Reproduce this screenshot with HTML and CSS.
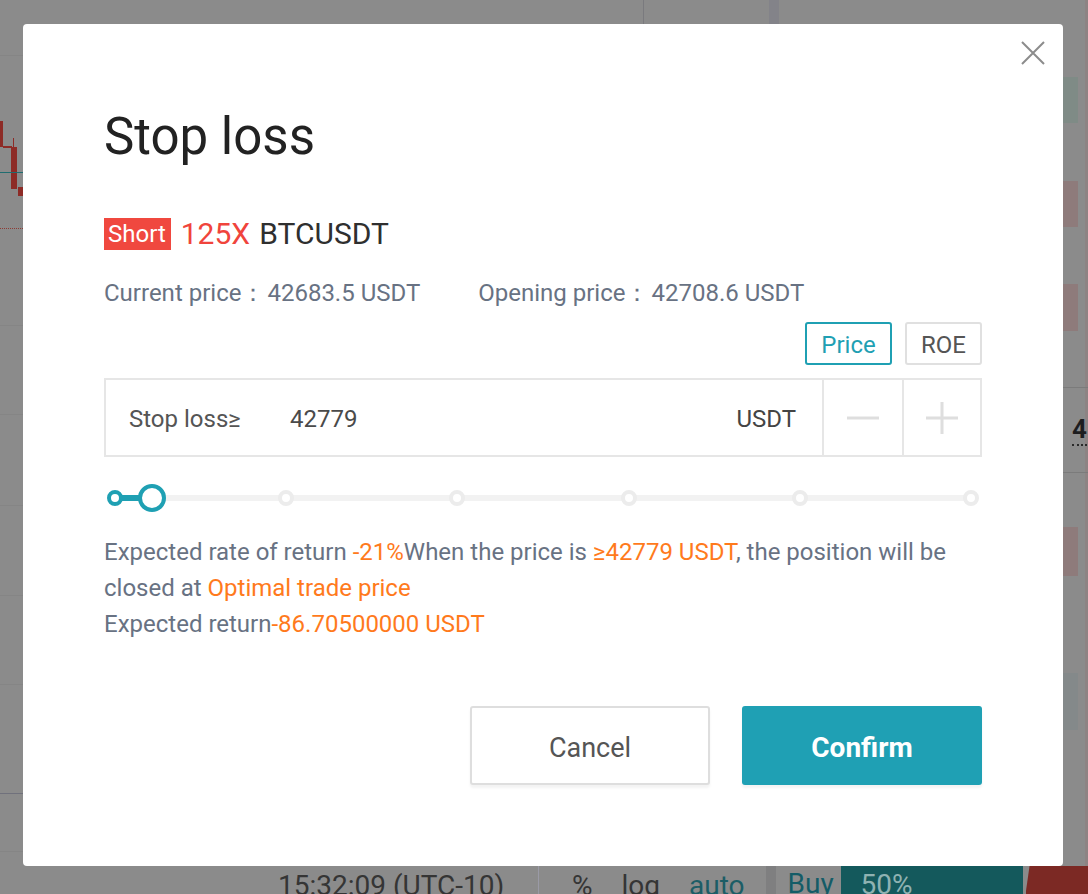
FILE: index.html
```html
<!DOCTYPE html>
<html lang="en">
<head>
<meta charset="utf-8">
<title>Stop loss</title>
<link rel="stylesheet" href="styles.css">
</head>
<body>
<div class="backdrop">
  <div class="chart-area">
    <div class="deco top-line"></div>
    <div class="deco top-band"></div>
    <div class="deco candle c1"></div>
    <div class="deco candle c2"></div>
    <div class="deco candle c3"></div>
    <div class="deco candle c4"></div>
    <div class="deco candle c5"></div>
    <div class="deco teal-line"></div>
    <div class="deco dotted-line"></div>
    <div class="deco grid g1"></div>
    <div class="deco grid g2"></div>
    <div class="deco grid g3"></div>
    <div class="deco grid g4"></div>
    <div class="deco grid g5"></div>
    <div class="deco grid g6"></div>
    <div class="deco grid g7"></div>
    <div class="deco grid dark g8"></div>
    <div class="deco book b1 green"></div>
    <div class="deco book b2 red"></div>
    <div class="deco book b3 red"></div>
    <div class="deco book b4 red"></div>
    <div class="deco book b5 green"></div>
    <div class="deco edge-col"></div>
    <div class="deco hline h1"></div>
    <div class="deco hline h2"></div>
    <div class="deco last-price">4</div>
  </div>
  <div class="bottom-bar">
    <span class="bb-time">15:32:09 (UTC-10)</span>
    <span class="bb-sep"></span>
    <span class="bb-opt">%</span>
    <span class="bb-opt">log</span>
    <span class="bb-opt bb-auto">auto</span>
    <span class="bb-band"></span>
    <span class="bb-buy">Buy</span>
    <span class="bb-pct">50%</span>
    <span class="bb-red"></span>
  </div>
</div>

<div class="modal">
  <button class="close" aria-label="Close">
    <svg width="24" height="24" viewBox="0 0 24 24"><path d="M1 1 L23 23 M23 1 L1 23" stroke="#8c8c8c" stroke-width="2" fill="none"/></svg>
  </button>
  <h1 class="title">Stop loss</h1>
  <div class="product">
    <span class="badge">Short</span>
    <span class="lev">125X</span>
    <span class="sym">BTCUSDT</span>
  </div>
  <div class="prices">
    <span class="pitem"><span class="plabel">Current price：</span>42683.5 USDT</span>
    <span class="pitem"><span class="plabel">Opening price：</span>42708.6 USDT</span>
  </div>
  <div class="modes">
    <button class="mode active">Price</button>
    <button class="mode">ROE</button>
  </div>
  <div class="input-row">
    <span class="in-label">Stop loss≥</span>
    <span class="in-value">42779</span>
    <span class="in-unit">USDT</span>
    <span class="step">
      <svg width="34" height="34" viewBox="0 0 34 34"><path d="M1 17 H33" stroke="#dedede" stroke-width="3"/></svg>
    </span>
    <span class="step last">
      <svg width="34" height="34" viewBox="0 0 34 34"><path d="M1 17 H33 M17 1 V33" stroke="#dedede" stroke-width="3"/></svg>
    </span>
  </div>
  <div class="slider">
    <div class="track"></div>
    <div class="fill"></div>
    <div class="dots">
      <span class="dot on"></span>
      <span class="dot"></span>
      <span class="dot"></span>
      <span class="dot"></span>
      <span class="dot"></span>
      <span class="dot"></span>
    </div>
    <div class="handle"></div>
  </div>
  <div class="desc">
    <p>Expected rate of return <em>-21%</em>When the price is <em>≥42779 USDT</em>, the position will be closed at <em>Optimal trade price</em></p>
    <p>Expected return<em>-86.70500000 USDT</em></p>
  </div>
  <div class="actions">
    <button class="btn cancel">Cancel</button>
    <button class="btn confirm">Confirm</button>
  </div>
</div>
</body>
</html>
```

FILE: styles.css
```css
* { box-sizing: border-box; }
html, body {
  margin: 0;
  padding: 0;
}
body {
  width: 1088px;
  height: 894px;
  overflow: hidden;
  position: relative;
  font-family: Roboto, "Noto Sans", "Liberation Sans", sans-serif;
  background: #8a8a8a;
}

/* ---------- dimmed page behind the dialog ---------- */
.backdrop {
  width: 1088px;
  height: 894px;
  display: flex;
  flex-direction: column;
  background: #8b8b8b;
}
.chart-area {
  flex: 1;
  position: relative;
}
.deco { position: absolute; }
.top-line { left: 643px; top: 0; width: 1px; height: 30px; background: #7a7a7e; }
.top-band { left: 769px; top: 0; width: 10px; height: 30px; background: #838389; }
.candle { background: #8d2b26; }
.c1 { left: 0; top: 121px; width: 3px; height: 26px; }
.c2 { left: 3px; top: 146px; width: 9px; height: 2px; }
.c3 { left: 13px; top: 138px; width: 1px; height: 10px; }
.c4 { left: 11px; top: 147px; width: 6px; height: 42px; }
.c5 { left: 18px; top: 187px; width: 5px; height: 9px; }
.teal-line { left: 0; top: 172px; width: 23px; height: 1px; background: #206d70; }
.dotted-line { left: 0; top: 228px; width: 23px; height: 0; border-top: 1px dotted #8d3a34; }
.grid { left: 0; width: 23px; height: 1px; background: #858585; }
.g1 { top: 55px; }
.g2 { top: 325px; }
.g3 { top: 414px; }
.g4 { top: 505px; }
.g5 { top: 595px; }
.g6 { top: 684px; }
.g7 { top: 851px; }
.g8 { top: 793px; background: #70717c; }
.dark { height: 1px; }
.book { left: 1063px; width: 15px; }
.green { background: #7f8b86; }
.red { background: #8e7b7b; }
.b1 { top: 77px; height: 46px; }
.b2 { top: 181px; height: 46px; }
.b3 { top: 284px; height: 47px; }
.b4 { top: 527px; height: 49px; }
.b5 { top: 673px; height: 57px; background: #84898a; }
.edge-col { left: 1085px; top: 0; width: 3px; height: 866px; background: #8f8080; opacity: .7; }
.hline { left: 1063px; width: 25px; height: 1px; background: #7b7b7b; }
.h1 { top: 387px; }
.h2 { top: 472px; }
.last-price {
  left: 1072px; top: 414px;
  font-size: 26px; font-weight: 700; color: #1d1d1f;
  border-bottom: 2px dotted #2a2a2a;
  line-height: 30px;
}

.bottom-bar {
  height: 28px;
  display: flex;
  align-items: flex-start;
  padding-left: 278px;
  font-size: 28px;
  line-height: 34px;
  color: #353535;
  overflow: hidden;
}
.bb-time { width: 260px; margin-top: 3px; }
.bb-sep { width: 1px; height: 28px; background: #9a9aa6; margin-right: 33px; }
.bb-opt { margin-right: 29px; margin-top: 3px; }
.bb-auto { color: #1c5d66; margin-right: 21px; }
.bb-band { width: 10px; height: 28px; background: #7f7f80; margin-right: 12px; }
.bb-buy { color: #145c67; width: 53px; margin-top: 1px; }
.bb-pct { width: 182px; height: 28px; background: #14595c; color: #8fb2b2; padding-left: 20px; margin-right: 3px; padding-top: 2px; }
.bb-red { flex: 1; height: 28px; background: #7c2924; clip-path: polygon(4px 0, 100% 0, 100% 100%, 0 100%); }

/* ---------- dialog ---------- */
.modal {
  position: absolute;
  left: 23px;
  top: 24px;
  width: 1040px;
  height: 842px;
  background: #fff;
  border-radius: 4px;
  padding: 83px 81px 81px 81px;
  display: flex;
  flex-direction: column;
  color: #687283;
}
.close {
  position: absolute;
  right: 18px;
  top: 17px;
  width: 24px;
  height: 24px;
  padding: 0;
  border: 0;
  background: none;
  display: block;
}
.close svg { display: block; }

.title {
  margin: 0;
  font-size: 51px;
  line-height: 60px;
  font-weight: 400;
  color: #222;
}
.product {
  margin-top: 51px;
  height: 32px;
  display: flex;
  align-items: center;
}
.badge {
  height: 32px;
  line-height: 33px;
  padding: 0 5px 0 4px;
  background: #f0483f;
  color: #fff;
  font-size: 24px;
}
.lev {
  margin-left: 10px;
  font-size: 30px;
  line-height: 32px;
  color: #f0443c;
}
.sym {
  margin-left: 9px;
  font-size: 30px;
  line-height: 32px;
  color: #2f2f2f;
}
.prices {
  margin-top: 28px;
  display: flex;
  font-size: 24px;
  line-height: 30px;
  color: #687283;
}
.pitem { margin-right: 58px; }
.plabel { margin-right: 2px; }

.modes {
  margin-top: 14px;
  display: flex;
  justify-content: flex-end;
  gap: 13px;
}
.mode {
  height: 43px;
  padding: 3px 0 0;
  border: 2px solid #e0e0e0;
  border-radius: 3px;
  background: #fff;
  font-family: inherit;
  font-size: 24px;
  color: #555;
  width: 77px;
}
.mode.active {
  width: 87px;
  border-color: #1fa0b3;
  color: #1fa0b3;
}

.input-row {
  margin-top: 13px;
  height: 79px;
  border: 2px solid #e6e6e6;
  display: flex;
  align-items: center;
  font-size: 24px;
  color: #555;
}
.in-label { width: 184px; padding-left: 23px; padding-top: 2px; }
.in-value { flex: 1; color: #4a4a4a; padding-top: 2px; }
.in-unit { padding-right: 26px; color: #444; padding-top: 2px; }
.step {
  width: 80px;
  height: 100%;
  border-left: 2px solid #e6e6e6;
  display: flex;
  align-items: center;
  justify-content: center;
}
.step.last { width: 78px; }
.step svg { display: block; }

.slider {
  margin-top: 27px;
  height: 28px;
  position: relative;
}
.track {
  position: absolute;
  left: 11px;
  width: 856px;
  top: 11px;
  height: 6px;
  background: #f2f2f2;
}
.fill {
  position: absolute;
  left: 11px;
  width: 36px;
  top: 11px;
  height: 6px;
  background: #1fa0b3;
}
.dots {
  position: relative;
  height: 28px;
  margin: 0 3px;
  display: flex;
  justify-content: space-between;
  align-items: center;
}
.dot {
  width: 16px;
  height: 16px;
  border-radius: 50%;
  background: #fff;
  border: 4px solid #ececec;
}
.dot.on { border-color: #1fa0b3; }
.handle {
  position: absolute;
  left: 34px;
  top: 0;
  width: 28px;
  height: 28px;
  border-radius: 50%;
  background: #fff;
  border: 4px solid #1fa0b3;
}

.desc {
  margin-top: 22px;
  font-size: 24px;
  line-height: 36px;
  color: #687283;
}
.desc p { margin: 0; }
.desc em { font-style: normal; color: #ff7a1c; }

.actions {
  margin-top: auto;
  display: flex;
  justify-content: flex-end;
  gap: 32px;
}
.btn {
  width: 240px;
  height: 79px;
  border-radius: 3px;
  font-family: inherit;
  font-size: 27px;
  padding: 4px 0 0;
  box-shadow: 0 3px 3px rgba(0,0,0,0.05);
}
.cancel {
  background: #fff;
  border: 2px solid #dedede;
  color: #555;
}
.confirm {
  background: #1fa0b4;
  border: 0;
  color: #fff;
  font-weight: 700;
  font-size: 28px;
}
```
